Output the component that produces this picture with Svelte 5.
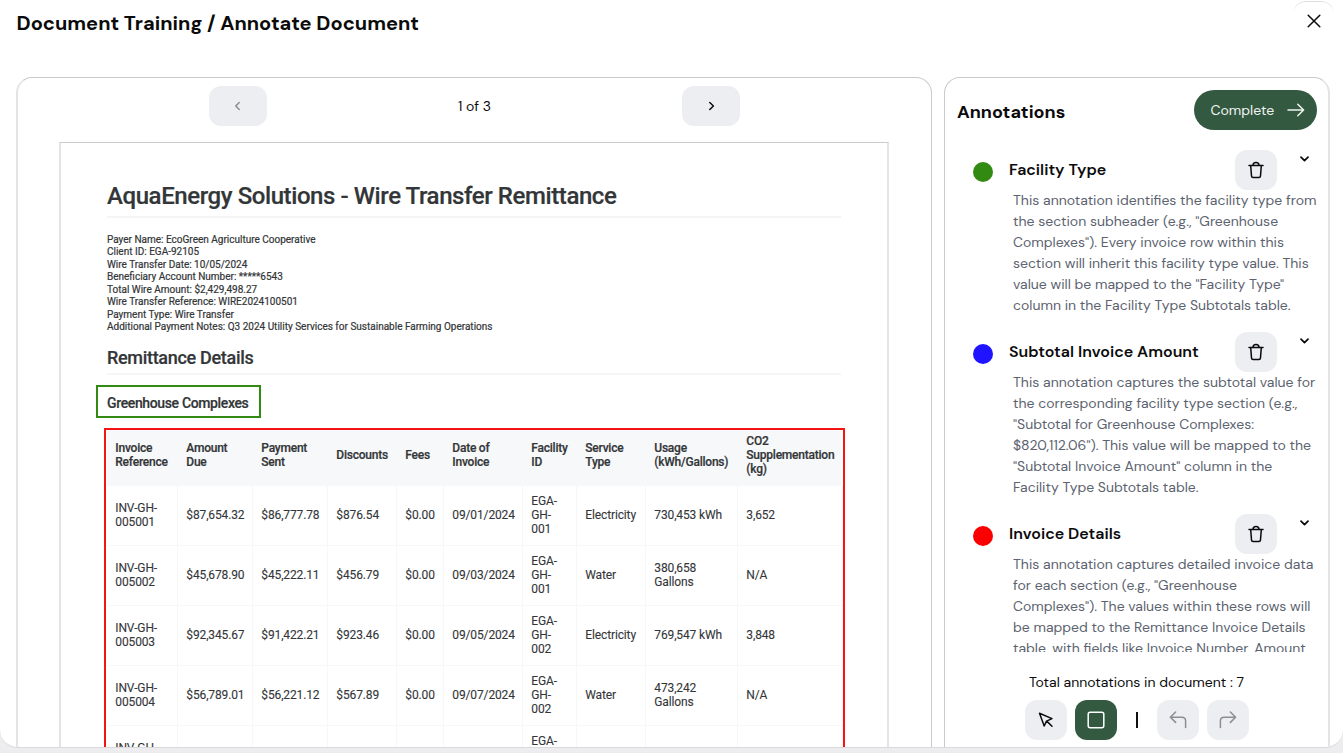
<script lang="ts">
	let page = $state(1);
	let tool = $state('box');
	const pageCount = 3;
	const total = 7;

	const details = [
		'Payer Name: EcoGreen Agriculture Cooperative',
		'Client ID: EGA-92105',
		'Wire Transfer Date: 10/05/2024',
		'Beneficiary Account Number: *****6543',
		'Total Wire Amount: $2,429,498.27',
		'Wire Transfer Reference: WIRE2024100501',
		'Payment Type: Wire Transfer',
		'Additional Payment Notes: Q3 2024 Utility Services for Sustainable Farming Operations'
	];

	const columns = [
		'Invoice\nReference',
		'Amount\nDue',
		'Payment\nSent',
		'Discounts',
		'Fees',
		'Date of\nInvoice',
		'Facility\nID',
		'Service\nType',
		'Usage\n(kWh/Gallons)',
		'CO2\nSupplementation\n(kg)'
	];

	const rows = [
		['INV-GH-\n005001', '$87,654.32', '$86,777.78', '$876.54', '$0.00', '09/01/2024', 'EGA-\nGH-\n001', 'Electricity', '730,453 kWh', '3,652'],
		['INV-GH-\n005002', '$45,678.90', '$45,222.11', '$456.79', '$0.00', '09/03/2024', 'EGA-\nGH-\n001', 'Water', '380,658\nGallons', 'N/A'],
		['INV-GH-\n005003', '$92,345.67', '$91,422.21', '$923.46', '$0.00', '09/05/2024', 'EGA-\nGH-\n002', 'Electricity', '769,547 kWh', '3,848'],
		['INV-GH-\n005004', '$56,789.01', '$56,221.12', '$567.89', '$0.00', '09/07/2024', 'EGA-\nGH-\n002', 'Water', '473,242\nGallons', 'N/A'],
		['INV-GH-\n005005', '', '', '', '', '', 'EGA-\nGH-\n003', '', '', '']
	];

	const annotations = [
		{
			name: 'Facility Type',
			color: '#338a13',
			text: 'This annotation identifies the facility type from\nthe section subheader (e.g., "Greenhouse\nComplexes"). Every invoice row within this\nsection will inherit this facility type value. This\nvalue will be mapped to the "Facility Type"\ncolumn in the Facility Type Subtotals table.'
		},
		{
			name: 'Subtotal Invoice Amount',
			color: '#1f14ff',
			text: 'This annotation captures the subtotal value for\nthe corresponding facility type section (e.g.,\n"Subtotal for Greenhouse Complexes:\n$820,112.06"). This value will be mapped to the\n"Subtotal Invoice Amount" column in the\nFacility Type Subtotals table.'
		},
		{
			name: 'Invoice Details',
			color: '#fb0000',
			text: 'This annotation captures detailed invoice data\nfor each section (e.g., "Greenhouse\nComplexes"). The values within these rows will\nbe mapped to the Remittance Invoice Details\ntable, with fields like Invoice Number, Amount'
		}
	];
</script>

<div class="modal">
	<header class="topbar">
		<h1>Document Training / Annotate Document</h1>
		<button class="close" aria-label="Close">
			<svg width="14" height="14" viewBox="0 0 14 14"><path d="M1.2 1.2l11.6 11.6M12.8 1.2L1.2 12.8" /></svg>
		</button>
	</header>

	<main>
		<section class="panel viewer">
			<nav class="pager">
				<button class="btn page-btn" aria-label="Previous" disabled={page === 1} onclick={() => page--}>
					<svg width="8" height="10" viewBox="0 0 8 10"><path d="M5.2 1.5L1.8 5l3.4 3.5" /></svg>
				</button>
				<span>{page} of {pageCount}</span>
				<button class="btn page-btn" aria-label="Next" disabled={page === pageCount} onclick={() => page++}>
					<svg width="8" height="10" viewBox="0 0 8 10"><path d="M2.8 1.5L6.4 5L2.8 8.5" /></svg>
				</button>
			</nav>

			<article class="sheet">
				<h2>AquaEnergy Solutions - Wire Transfer Remittance</h2>
				<div class="details">
					{#each details as line}
						<p>{line}</p>
					{/each}
				</div>
				<h3>Remittance Details</h3>
				<h4>Greenhouse Complexes</h4>
				<div class="table">
					<div class="row head">
						{#each columns as column}
							<div class="cell">{column}</div>
						{/each}
					</div>
					{#each rows as row}
						<div class="row">
							{#each row as value}
								<div class="cell">{value}</div>
							{/each}
						</div>
					{/each}
				</div>
				<div class="mark mark-type"></div>
				<div class="mark mark-invoices"></div>
			</article>
		</section>

		<aside class="panel side">
			<div class="side-head">
				<h2>Annotations</h2>
				<button class="complete">
					<span>Complete</span>
					<svg width="18" height="14" viewBox="0 0 18 14"><path d="M1 7h15.5M10.8 1.2L16.6 7l-5.8 5.8" /></svg>
				</button>
			</div>

			<div class="list">
				{#each annotations as item}
					<div class="item">
						<div class="item-head">
							<span class="dot" style="background: {item.color}"></span>
							<h3>{item.name}</h3>
							<button class="btn tool" aria-label="Delete">
								<svg width="16" height="18" viewBox="0 0 16 18"><path d="M1 4.5h14M5 4.3C5 .4 11 .4 11 4.3M2.7 4.7l.8 10.2q.1 1.6 1.6 1.6h5.8q1.5 0 1.6-1.6l.8-10.2" /></svg>
							</button>
							<svg class="chevron" width="10" height="8" viewBox="0 0 10 8"><path d="M2 2.2L5.5 5.7L9 2.2" /></svg>
						</div>
						<p>{item.text}</p>
					</div>
				{/each}
			</div>

			<p class="total">Total annotations in document : {total}</p>
			<div class="tools">
				<button class="btn tool" class:active={tool === 'select'} aria-label="Select" onclick={() => (tool = 'select')}>
					<svg width="16" height="16" viewBox="0 0 16 16"><path d="M1.5 1.3L6.2 14l2.3-4.9L14 6.6zM8.8 9.1l5.2 5.1" /></svg>
				</button>
				<button class="btn tool" class:active={tool === 'box'} aria-label="Box" onclick={() => (tool = 'box')}>
					<svg width="18" height="18" viewBox="0 0 18 18"><rect x="1.2" y="1.2" width="15.6" height="15.6" rx="2" /></svg>
				</button>
				<span class="divider"></span>
				<button class="btn tool" aria-label="Undo" disabled>
					<svg width="18" height="18" viewBox="0 0 18 18"><path d="M6.6 1L1.4 6.2l5.2 5.2M1.6 6.2h11.2q3.8 0 3.8 3.8v6.6" /></svg>
				</button>
				<button class="btn tool" aria-label="Redo" disabled>
					<svg width="18" height="18" viewBox="0 0 18 18"><path d="M11.4 1l5.2 5.2l-5.2 5.2M16.4 6.2H5.2q-3.8 0-3.8 3.8v6.6" /></svg>
				</button>
			</div>
		</aside>
	</main>
</div>

<style>
	:global(body) {
		background: #ededef;
		overflow: hidden;
	}

	* {
		box-sizing: border-box;
		margin: 0;
	}

	.modal {
		display: flex;
		flex-direction: column;
		height: 748px;
		overflow: hidden;
		background: #fff;
		border-bottom: 1px solid #d9d9db;
		border-radius: 0 0 18px 18px;
		color: #0b0b0c;
		font-family: 'DM Sans', Inter, sans-serif;
	}

	button {
		padding: 0;
		border: 0;
		background: none;
		color: inherit;
		font: inherit;
	}

	svg {
		display: block;
		fill: none;
		stroke: currentColor;
		stroke-width: 1.5;
		stroke-linecap: round;
		stroke-linejoin: round;
	}

	.topbar {
		display: flex;
		justify-content: space-between;
		height: 77px;
		padding: 1px 9px 0 16.5px;
	}

	h1 {
		font-size: 20px;
		font-weight: 700;
		line-height: 44px;
	}

	.close {
		position: relative;
		display: grid;
		place-items: center;
		width: 41px;
		height: 40px;
	}

	.close::before {
		content: '';
		position: absolute;
		inset: 0;
		border: 1px solid #dcdcdc;
		border-radius: 12px;
		mask-image: linear-gradient(#000, transparent 12px);
	}

	main {
		display: flex;
		flex: 1;
		gap: 12px;
		min-height: 0;
		padding: 0 13px 0 16px;
	}

	.panel {
		display: flex;
		flex-direction: column;
		height: 700px;
		border: 1px solid #cacaca;
		border-radius: 16px 16px 0 0;
	}

	.viewer {
		align-items: center;
		width: 916px;
		padding-top: 8px;
		border-left: 2px solid #e4e4e4;
	}

	.pager {
		display: flex;
		align-items: center;
		justify-content: space-evenly;
		width: 100%;
		flex-shrink: 0;
		font-size: 14px;
	}

	.btn {
		display: grid;
		place-items: center;
		height: 40px;
		border-radius: 12px;
		background: #edeef2;
	}

	.btn:disabled {
		color: #8d8e91;
	}

	.page-btn {
		width: 58px;
	}

	.sheet {
		position: relative;
		flex-shrink: 0;
		width: 830px;
		height: 700px;
		margin: 16px 1px 0 0;
		padding: 35px 46px 0;
		border: 2px solid #e4e4e4;
		border-top: 1px solid #cbcbcb;
		font-family: Roboto, sans-serif;
		color: #333638;
	}

	.sheet h2 {
		height: 40px;
		border-bottom: 2px solid #f5f5f5;
		font-size: 24px;
		font-weight: 500;
		line-height: 36px;
		letter-spacing: -0.41px;
		-webkit-text-stroke: 0.2px;
	}

	.details {
		padding-top: 16px;
		font-size: 10px;
		line-height: 12.45px;
		-webkit-text-stroke: 0.2px;
	}

	.details p {
		white-space: nowrap;
	}

	.sheet h3 {
		height: 30px;
		margin-top: 11px;
		border-bottom: 2px solid #f6f6f6;
		font-size: 18px;
		font-weight: 500;
		line-height: 26px;
		letter-spacing: -0.31px;
		-webkit-text-stroke: 0.2px;
	}

	.sheet h4 {
		margin-top: 18px;
		font-size: 14px;
		font-weight: 500;
		line-height: 20px;
		letter-spacing: -0.36px;
		-webkit-text-stroke: 0.2px;
	}

	.table {
		margin-top: 17px;
		font-size: 12px;
		line-height: 14.4px;
		letter-spacing: -0.13px;
		-webkit-text-stroke: 0.1px;
	}

	.row {
		display: grid;
		grid-template-columns: 71px 75px 75px 69px 47px 79px 54px 69px 92px 105px;
		height: 60px;
	}

	.head {
		height: 56px;
		background: #f7f8fa;
		font-weight: 500;
		line-height: 14px;
		letter-spacing: -0.23px;
		-webkit-text-stroke: 0.2px;
	}

	.cell {
		display: flex;
		align-items: center;
		padding-left: 8.3px;
		border-right: 1px solid #f7f7f7;
		border-bottom: 1px solid #f7f7f7;
		white-space: pre;
	}

	.head .cell {
		padding-bottom: 5px;
		border-color: transparent;
	}

	/* boxes drawn by the user on top of the page */
	.mark {
		position: absolute;
		border: 2px solid #338a13;
	}

	.mark-type {
		top: 242px;
		left: 35px;
		width: 165px;
		height: 33px;
	}

	.mark-invoices {
		top: 285px;
		left: 43px;
		width: 741px;
		height: 500px;
		border-color: #f51414;
	}

	.side {
		flex: 1;
		padding: 12px 11px 0 12px;
		border-right: 2px solid #e4e4e4;
	}

	.side-head {
		display: flex;
		align-items: center;
		justify-content: space-between;
		height: 40px;
	}

	.side-head h2 {
		padding-top: 3px;
		font-size: 18px;
		font-weight: 700;
	}

	.complete {
		display: flex;
		align-items: center;
		justify-content: space-between;
		width: 123px;
		height: 40px;
		padding: 0 12px 0 16.5px;
		border-radius: 20px;
		background: #335940;
		color: #f0f4f1;
		font-size: 14px;
	}

	.list {
		height: 502px;
		margin-top: 20px;
		overflow: hidden;
	}

	.item {
		padding-left: 16px;
		margin-bottom: 16px;
	}

	.item-head {
		display: flex;
		align-items: center;
		height: 40px;
	}

	.dot {
		width: 20px;
		height: 20px;
		margin: 4px 16px 0 0;
		border-radius: 50%;
	}

	.item-head h3 {
		flex: 1;
		padding-bottom: 1px;
		font-size: 16px;
		font-weight: 600;
		line-height: 20px;
	}

	.tool {
		width: 42px;
	}

	.chevron {
		align-self: flex-start;
		margin: 5px 8px 0 22px;
		stroke-width: 1.7;
	}

	.item p {
		padding-left: 40px;
		color: #5c636f;
		font-size: 14px;
		line-height: 21px;
		white-space: pre;
	}

	.total {
		margin: 20px 1px 0 0;
		font-size: 14px;
		line-height: 20px;
		text-align: center;
	}

	.tools {
		display: flex;
		align-items: center;
		justify-content: center;
		gap: 8px;
		margin: 8px 1px 0 0;
	}

	.active {
		background: #335940;
		color: #fff;
	}

	.divider {
		width: 2px;
		height: 16px;
		margin: 0 11px;
		background: #111;
	}
</style>
